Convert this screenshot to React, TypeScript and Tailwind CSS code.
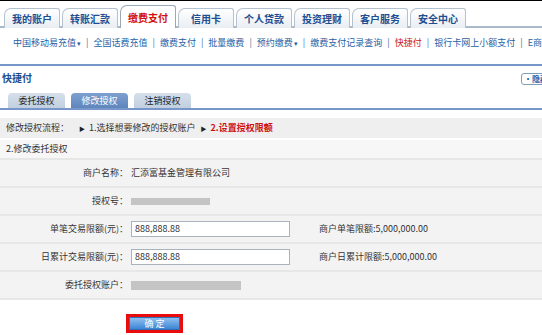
import React from "react";

const topTabs = ["我的账户", "转账汇款", "缴费支付", "信用卡", "个人贷款", "投资理财", "客户服务", "安全中心"];

const subNav = [
  { label: "中国移动易充值", drop: true },
  { label: "全国话费充值" },
  { label: "缴费支付" },
  { label: "批量缴费" },
  { label: "预约缴费", drop: true },
  { label: "缴费支付记录查询" },
  { label: "快捷付", active: true },
  { label: "银行卡网上小额支付" },
  { label: "E商贸通" },
];

const font = { fontFamily: '"Noto Sans CJK SC", "Noto Sans", sans-serif' };

function Row({ label, children }: { label: string; children?: React.ReactNode }) {
  return (
    <div className="flex h-[28px] items-center border-b-2 border-[#e7e7e7] bg-[#f3f3f3]">
      <div className="w-[128px] shrink-0 text-right text-[9px] text-[#333]">{label}</div>
      <div className="flex items-center pl-[3px]">{children}</div>
    </div>
  );
}

function Amount({ value, limit }: { value: string; limit: string }) {
  return (
    <>
      <div className="flex h-[16px] w-[159px] items-center border border-[#a9b3bd] bg-white px-[3px] text-[9px] text-[#333]">
        {value}
      </div>
      <span className="ml-[29px] whitespace-nowrap text-[9px] text-[#333]">{limit}</span>
    </>
  );
}

export default function App() {
  return (
    <div className="h-[335px] w-[542px] overflow-hidden bg-white" style={font}>
      <div className="h-px bg-black" />

      {/* top tabs */}
      <div className="flex h-[27px] items-end gap-[2px] border-b-2 border-[#a9bacd] pl-[4px] pt-[3px]">
        {topTabs.map((t) => {
          const active = t === "缴费支付";
          return (
            <div
              key={t}
              className={`-mb-[2px] flex w-[56px] shrink-0 items-center justify-center rounded-tl-[7px] rounded-tr-[3px] border border-b-0 text-[10px] font-bold ${
                active
                  ? "h-[23px] border-[#9aa9ba] bg-white text-[#d01010]"
                  : "h-[20px] border-[#b4c1cf] bg-gradient-to-b from-white to-[#e9eef3] text-[#1d4f91]"
              }`}
            >
              {t}
            </div>
          );
        })}
      </div>

      {/* sub navigation */}
      <div className="flex h-[30px] items-center gap-[5px] whitespace-nowrap pl-[13px] text-[9px]">
        {subNav.map((s, i) => (
          <React.Fragment key={s.label}>
            {i > 0 && <span className="text-[#4a6f9e]">|</span>}
            <span className={s.active ? "text-[#d02020]" : "text-[#1f5fa6]"}>
              {s.label}
              {s.drop && <span className="ml-[1px] text-[7px]">▾</span>}
            </span>
          </React.Fragment>
        ))}
      </div>

      <div className="mt-[6px] border-t-2 border-[#7797cb]">
        <div className="flex h-[22px] items-center justify-between">
          <span className="pl-[2px] text-[10px] font-bold text-[#1d4f91]">快捷付</span>
          <span className="-mr-[9px] mt-[4px] flex h-[12px] items-center rounded-[3px] border border-[#7f9db9] bg-white px-[2px] text-[8px] font-bold text-[#1f5fa6]">
            •隐藏
          </span>
        </div>

        {/* sub tabs */}
        <div className="mt-[5px] flex h-[17px] items-end gap-[6px] border-b-2 border-[#7797cb] pl-[8px]">
          {["委托授权", "修改授权", "注销授权"].map((t) => {
            const active = t === "修改授权";
            return (
              <div
                key={t}
                className={`flex h-[15px] w-[57px] items-center justify-center rounded-t-[4px] text-[9px] ${
                  active
                    ? "bg-gradient-to-b from-[#7da0cf] to-[#5f86bd] text-white"
                    : "bg-gradient-to-b from-[#d6e0ec] to-[#c2cfdf] text-[#222]"
                }`}
              >
                {t}
              </div>
            );
          })}
        </div>
      </div>

      {/* step bar */}
      <div className="mt-[8px] flex h-[20px] items-center whitespace-nowrap bg-[#efefef] pl-[6px] text-[9px] text-[#333]">
        <span>修改授权流程：</span>
        <span className="ml-[10px] text-[6px] text-[#222]">▶</span>
        <span className="ml-[4px]">1.选择想要修改的授权账户</span>
        <span className="ml-[5px] text-[6px] text-[#222]">▶</span>
        <span className="ml-[4px] font-bold text-[#d01010]">2.设置授权限额</span>
      </div>

      {/* form */}
      <div className="mt-[2px]">
        <div className="flex h-[20px] items-center border-b-2 border-[#e7e7e7] bg-[#f7f7f7] pl-[6px] text-[9px] text-[#333]">
          2.修改委托授权
        </div>
        <Row label="商户名称：">
          <span className="text-[9px] text-[#333]">汇添富基金管理有限公司</span>
        </Row>
        <Row label="授权号：">
          <div className="h-[7px] w-[79px] bg-[#c4c4c4]" />
        </Row>
        <Row label="单笔交易限额(元)：">
          <Amount value="888,888.88" limit="商户单笔限额:5,000,000.00" />
        </Row>
        <Row label="日累计交易限额(元)：">
          <Amount value="888,888.88" limit="商户日累计限额:5,000,000.00" />
        </Row>
        <Row label="委托授权账户：">
          <div className="h-[9px] w-[110px] bg-[#c4c4c4]" />
        </Row>
      </div>

      {/* submit */}
      <div className="mt-[14px] pl-[126px]">
        <div className="flex h-[19px] w-[57px] border-[3px] border-[#e80c0c]">
          <div className="flex flex-1 items-center justify-center border border-[#2d6fb8] bg-gradient-to-b from-[#8dc0f0] to-[#3b85d4] text-[9px] text-white">
            确 定
          </div>
        </div>
      </div>
    </div>
  );
}
